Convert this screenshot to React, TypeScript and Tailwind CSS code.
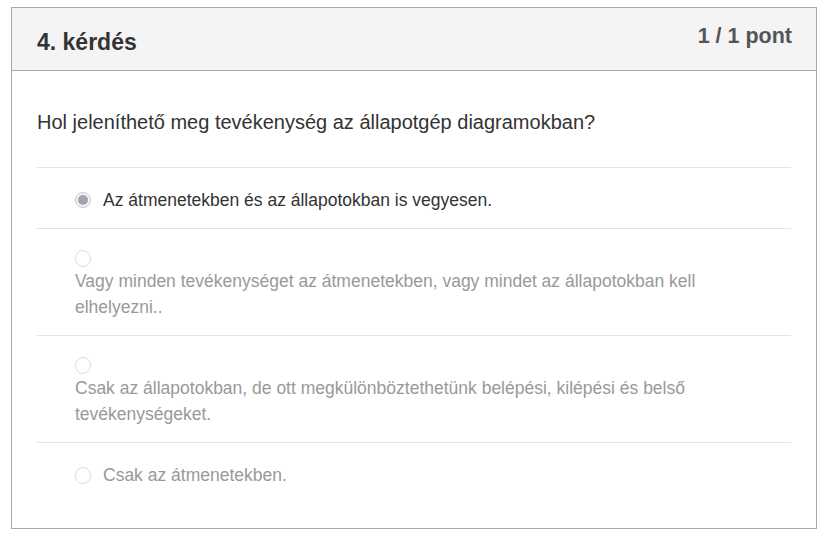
import React from 'react';

interface Option {
  text: string;
  selected?: boolean;
}

const options: Option[] = [
  { text: 'Az átmenetekben és az állapotokban is vegyesen.', selected: true },
  { text: 'Vagy minden tevékenységet az átmenetekben, vagy mindet az állapotokban kell elhelyezni..' },
  { text: 'Csak az állapotokban, de ott megkülönböztethetünk belépési, kilépési és belső tevékenységeket.' },
  { text: 'Csak az átmenetekben.' },
];

const Radio = ({ selected }: { selected?: boolean }) => (
  <span className="flex h-[20px] w-[16px] items-center mr-[12px]">
    {selected ? (
      <span className="flex h-[16px] w-[16px] items-center justify-center rounded-full border border-[#c8c8cc] bg-[#f4f4f6]">
        <span className="h-[10px] w-[10px] rounded-full bg-[#a4a4ac]" />
      </span>
    ) : (
      <span className="h-[17px] w-[17px] rounded-full border border-[#dcdcdc] bg-white" />
    )}
  </span>
);

const App = () => {
  return (
    <div className="min-h-[535px] bg-white pt-[7px] pl-[11px] font-['Liberation_Sans',Arial,sans-serif]">
      <div className="w-[806px] border border-[#a9a9a9]">
        <div className="flex items-start justify-between border-b border-[#a9a9a9] bg-[#f4f4f4] h-[63px] pl-[25px] pr-[24px]">
          <h2 className="mt-[19px] text-[23px] font-bold leading-[30px] text-[#333]">4. kérdés</h2>
          <span className="mt-[14px] text-[21.5px] font-bold leading-[28px] text-[#555]">1 / 1 pont</span>
        </div>
        <div className="px-[25px] pt-[37px] pb-[25px]">
          <p className="text-[20px] leading-[28px] text-[#333] mb-[31px]">
            Hol jeleníthető meg tevékenység az állapotgép diagramokban?
          </p>
          <div>
            {options.map((o, i) => (
              <div
                key={i}
                className="flex flex-wrap items-center border-t border-[#e3e3e3] pl-[38px] pr-[12px] pt-[19px] pb-[15px]"
              >
                <Radio selected={o.selected} />
                <span
                  className={`text-[17.5px] leading-[26px] ${o.selected ? 'text-[#333]' : 'text-[#999]'}`}
                >
                  {o.text}
                </span>
              </div>
            ))}
          </div>
        </div>
      </div>
    </div>
  );
};

export default App;
